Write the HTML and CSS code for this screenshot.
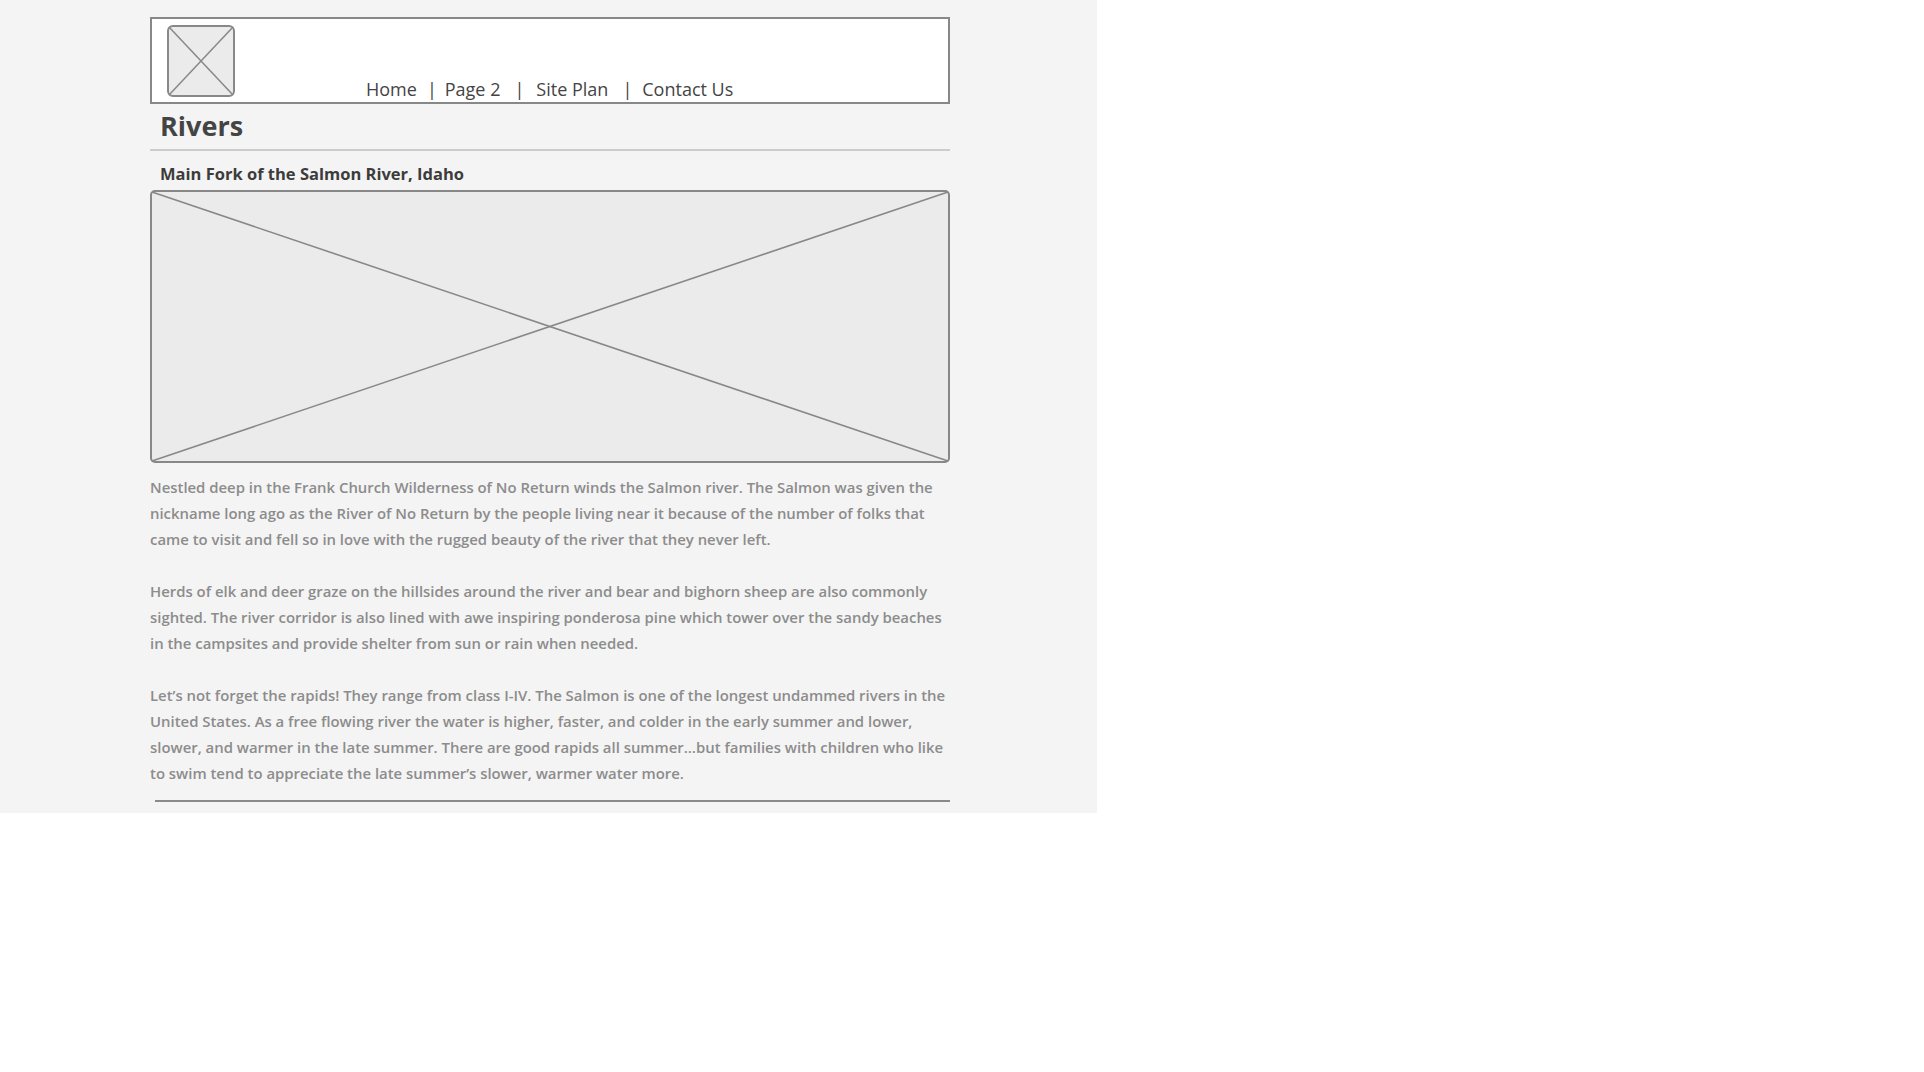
FILE: index.html
```html
<!DOCTYPE html>
<html>
<head>
<meta charset="utf-8">
<title>Rivers</title>
<link rel="stylesheet" href="styles.css">
</head>
<body>
<div class="page">
  <div class="wrap">
    <header class="header">
      <div class="logo">
        <svg width="68" height="72" viewBox="0 0 68 72">
          <rect x="1" y="1" width="66" height="70" rx="5" ry="5" fill="#ebebeb" stroke="#888" stroke-width="2"/>
          <line x1="2" y1="2" x2="66" y2="70" stroke="#888" stroke-width="1.5"/>
          <line x1="66" y1="2" x2="2" y2="70" stroke="#888" stroke-width="1.5"/>
        </svg>
      </div>
      <nav class="nav">
        <span class="nav-item n-home">Home</span>
        <span class="sep s1">|</span>
        <span class="nav-item n-page2">Page 2</span>
        <span class="sep s2">|</span>
        <span class="nav-item n-site">Site Plan</span>
        <span class="sep s3">|</span>
        <span class="nav-item n-contact">Contact Us</span>
      </nav>
    </header>

    <h1 class="title">Rivers</h1>
    <h2 class="subtitle">Main Fork of the Salmon River, Idaho</h2>

    <div class="image">
      <svg width="800" height="273" viewBox="0 0 800 273" preserveAspectRatio="none">
        <rect x="1" y="1" width="798" height="271" rx="4" ry="4" fill="#ebebeb" stroke="#888" stroke-width="2"/>
        <line x1="2" y1="2" x2="798" y2="271" stroke="#888" stroke-width="1.6"/>
        <line x1="798" y1="2" x2="2" y2="271" stroke="#888" stroke-width="1.6"/>
      </svg>
    </div>

    <div class="body-text">
      <p>Nestled deep in the Frank Church Wilderness of No Return winds the Salmon river. The Salmon was given the nickname long ago as the River of No Return by the people living near it because of the number of folks that came to visit and fell so in love with the rugged beauty of the river that they never left.</p>
      <p>Herds of elk and deer graze on the hillsides around the river and bear and bighorn sheep are also commonly sighted. The river corridor is also lined with awe inspiring ponderosa pine which tower over the sandy beaches in the campsites and provide shelter from sun or rain when needed.</p>
      <p>Let’s not forget the rapids! They range from class I-IV. The Salmon is one of the longest undammed rivers in the United States. As a free flowing river the water is higher, faster, and colder in the early summer and lower, slower, and warmer in the late summer. There are good rapids all summer…but families with children who like to swim tend to appreciate the late summer’s slower, warmer water more.</p>
    </div>

    <div class="footer-rule"></div>
  </div>
</div>
</body>
</html>
```

FILE: styles.css
```css
html, body {
  margin: 0;
  padding: 0;
  background: #ffffff;
}

.page {
  width: 1097px;
  height: 813px;
  background: #f4f4f4;
  font-family: "Open Sans", "Liberation Sans", sans-serif;
  overflow: hidden;
}

.wrap {
  width: 800px;
  margin-left: 150px;
  padding-top: 17px;
}

.header {
  box-sizing: border-box;
  height: 87px;
  background: #ffffff;
  border: 2px solid #888888;
  display: flex;
  align-items: flex-start;
  padding: 6px 0 0 15px;
}

.logo {
  width: 68px;
  height: 72px;
  flex: none;
}

.logo svg {
  display: block;
}

.nav {
  display: flex;
  align-items: baseline;
  margin-left: 131px;
  margin-top: 53px;
  font-size: 18px;
  line-height: 22px;
  color: #444444;
  white-space: nowrap;
}

.n-home { margin-right: 10px; }
.s1 { margin-right: 8px; }
.n-page2 { margin-right: 14px; }
.s2 { margin-right: 12px; }
.n-site { margin-right: 14px; }
.s3 { margin-right: 10px; }

.title {
  box-sizing: border-box;
  margin: 0;
  padding: 0 0 0 10px;
  font-size: 27px;
  font-weight: 700;
  line-height: 43px;
  height: 47px;
  color: #444444;
  border-bottom: 2px solid #cccccc;
}

.subtitle {
  box-sizing: border-box;
  margin: 0;
  padding: 6px 0 0 10px;
  font-size: 16.5px;
  font-weight: 700;
  line-height: 33px;
  height: 39px;
  color: #3c3c3c;
}

.image {
  height: 273px;
}

.image svg {
  display: block;
}

.body-text {
  margin-top: 11px;
  font-size: 14.9px;
  font-weight: 600;
  line-height: 26px;
  color: #8c8c8c;
}

.body-text p {
  margin: 0 0 26px 0;
}

.body-text p:last-child {
  margin-bottom: 0;
}

.footer-rule {
  margin-top: 14px;
  margin-left: 5px;
  height: 2px;
  background: #8a8a8a;
}
```
